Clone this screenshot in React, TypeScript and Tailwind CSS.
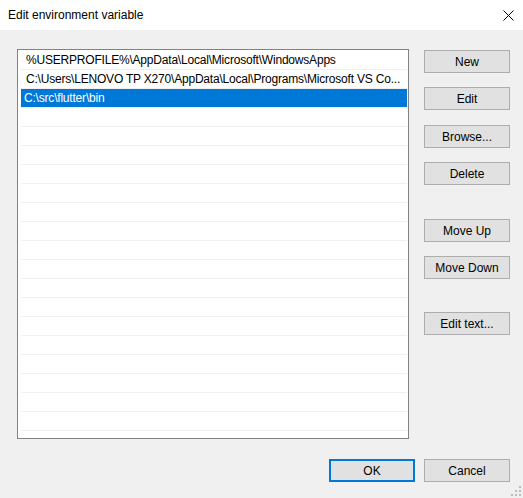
import React from "react";

const rows = [
  "%USERPROFILE%\\AppData\\Local\\Microsoft\\WindowsApps",
  "C:\\Users\\LENOVO TP X270\\AppData\\Local\\Programs\\Microsoft VS Co...",
  "C:\\src\\flutter\\bin",
];

function Btn({ label, className = "" }: { label: string; className?: string }) {
  return (
    <div
      className={
        "w-[86px] h-[23px] flex items-center justify-center bg-[#e1e1e1] border border-[#adadad] text-[12px] text-black leading-none " +
        className
      }
    >
      {label}
    </div>
  );
}

export default function App() {
  const allRows = Array.from({ length: 21 }, (_, i) => rows[i] ?? "");
  return (
    <div
      className="w-[523px] h-[498px] flex flex-col bg-[#f0f0f0] relative overflow-hidden select-none"
      style={{ fontFamily: '"Liberation Sans", Arial, sans-serif' }}
    >
      <div className="h-[30px] bg-white flex items-center justify-between pl-[8px] pr-[9px] shrink-0">
        <span className="text-[12px] text-black">Edit environment variable</span>
        <svg width="11" height="11" viewBox="0 0 11 11" className="mt-[1px]">
          <path d="M0.5 0.5 L10.5 10.5 M10.5 0.5 L0.5 10.5" stroke="#000" strokeWidth="1" />
        </svg>
      </div>
      <div className="flex-1 flex flex-col">
        <div className="flex pl-[17px] pt-[19px]">
          <div className="w-[392px] h-[390px] border border-[#828282] bg-white overflow-hidden pt-[1px] pl-[3px] pr-[1px]">
            {allRows.map((r, i) => (
              <div
                key={i}
                className={
                  "h-[19px] border-b border-[#f0f0f0] flex items-center text-[12px] tracking-[-0.2px] whitespace-nowrap overflow-hidden " +
                  (i === 2 ? "bg-[#0078d7] text-white pl-[3px]" : "text-black pl-[5px]")
                }
              >
                <span>{r}</span>
              </div>
            ))}
          </div>
          <div className="flex flex-col ml-[15px]">
            <Btn label="New" className="mt-[1px]" />
            <Btn label="Edit" className="mt-[14px]" />
            <Btn label="Browse..." className="mt-[15px]" />
            <Btn label="Delete" className="mt-[14px]" />
            <Btn label="Move Up" className="mt-[34px]" />
            <Btn label="Move Down" className="mt-[14px]" />
            <Btn label="Edit text..." className="mt-[33px]" />
          </div>
        </div>
        <div className="flex justify-end gap-[9px] pr-[13px] mt-[20px]">
          <div className="w-[86px] h-[23px] flex items-center justify-center bg-[#e1e1e1] border-2 border-[#0078d7] text-[12px] text-black leading-none">
            OK
          </div>
          <Btn label="Cancel" />
        </div>
      </div>
      <svg width="12" height="12" viewBox="0 0 12 12" className="absolute right-[1px] bottom-[1px]">
        <rect x="9" y="1" width="2" height="2" fill="#bcbcbc" />
        <rect x="5" y="5" width="2" height="2" fill="#bcbcbc" />
        <rect x="9" y="5" width="2" height="2" fill="#bcbcbc" />
        <rect x="1" y="9" width="2" height="2" fill="#bcbcbc" />
        <rect x="5" y="9" width="2" height="2" fill="#bcbcbc" />
        <rect x="9" y="9" width="2" height="2" fill="#bcbcbc" />
      </svg>
    </div>
  );
}
